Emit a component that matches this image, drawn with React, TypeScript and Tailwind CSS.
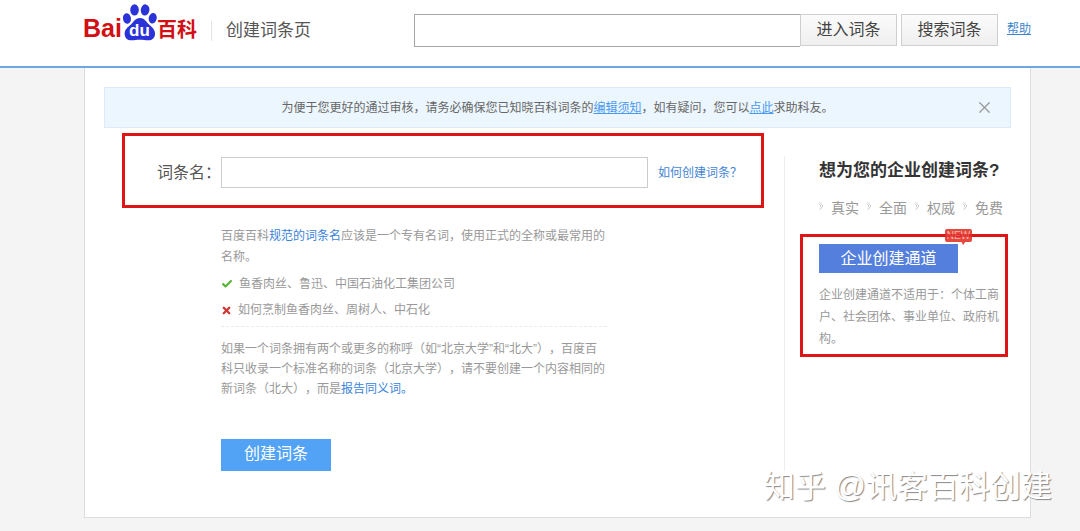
import { useState } from "react";
import { Check, X } from "lucide-react";

const tags = ["真实", "全面", "权威", "免费"];

function Logo() {
  return (
    <a href="#" className="flex items-end h-[37px] shrink-0 font-bold text-[#d20f14]">
      <span className="text-[25px] leading-[26px]">Bai</span>
      <span className="relative w-[35px] h-[37px]">
        <svg viewBox="156 10 106 112" className="w-full h-full" fill="#2a32d8">
          <ellipse cx="171" cy="54" rx="12" ry="16" transform="rotate(-10 171 54)" />
          <ellipse cx="194" cy="28" rx="13" ry="17" />
          <ellipse cx="226" cy="28" rx="13" ry="17" transform="rotate(8 226 28)" />
          <ellipse cx="249" cy="53" rx="12" ry="16" transform="rotate(12 249 53)" />
          <path d="M210 52c-14 0-19 12-27 20-9 8-19 14-19 28 0 13 9 20 20 20 10 0 16-2 26-2s16 2 26 2c12 0 20-8 20-20 0-13-9-20-18-28-9-9-14-20-28-20z" />
        </svg>
        <span className="absolute inset-x-0 bottom-0 text-center text-[17px] leading-[20px] text-white">du</span>
      </span>
      <span className="text-[20px] leading-[22px]">百科</span>
    </a>
  );
}

export default function CreateEntry() {
  const [keyword, setKeyword] = useState("");
  const [entryName, setEntryName] = useState("");
  const [showNotice, setShowNotice] = useState(true);

  return (
    <div
      lang="zh-CN"
      className="relative w-full min-h-screen bg-[#f4f4f4] text-[12px] text-[#999]
      font-['Liberation_Sans','Noto_Sans_CJK_SC',sans-serif] [text-spacing-trim:space-all]">
      {/* Header */}
      <header className="flex items-center h-[68px] pl-[83px] pr-[49px] pb-[5px] bg-white border-b-2 border-[#6ea6de]">
        <div className="flex items-start h-[53px] shrink-0">
          <Logo />
        </div>
        <h1 className="ml-[14px] pl-[14px] border-l border-[#e3e3e3] shrink-0 text-[17px] leading-[20px] text-[#555]">
          创建词条页
        </h1>
        <form className="flex flex-1 items-start min-w-0 ml-[103px]" onSubmit={(e) => e.preventDefault()}>
          <input
            aria-label="词条"
            value={keyword}
            onChange={(e) => setKeyword(e.target.value)}
            className="flex-1 min-w-0 h-[33px] px-2 text-[16px] text-[#333] bg-white border border-r-0 border-[#a5a5a5] outline-none"
          />
          <button className="w-[97px] h-8 shrink-0 text-[16px] text-[#444] border border-[#cfcfcf] bg-gradient-to-b from-[#fbfbfb] to-[#efefef]">
            进入词条
          </button>
          <button className="w-[97px] h-8 ml-1 shrink-0 text-[16px] text-[#444] border border-[#cfcfcf] bg-gradient-to-b from-[#fbfbfb] to-[#efefef]">
            搜索词条
          </button>
        </form>
        <a href="#" className="ml-[9px] pb-[3px] shrink-0 text-[#3b84cf] underline">帮助</a>
      </header>

      {/* Content */}
      <main className="ml-[84px] mr-[49px] px-[19px] pt-[19px] pb-[46px] bg-white border border-t-0 border-[#dcdcdc]">
        {showNotice && (
          <div className="relative flex items-center justify-center h-[41px] bg-[#ecf6fe] border border-[#dcebf7] text-[#666]">
            <p>
              为便于您更好的通过审核，请务必确保您已知晓百科词条的
              <a href="#" className="text-[#4a9af0] underline">编辑须知</a>
              ，如有疑问，您可以
              <a href="#" className="text-[#4a9af0] underline">点此</a>
              求助科友。
            </p>
            <button aria-label="关闭" onClick={() => setShowNotice(false)} className="absolute right-4 top-[10px]">
              <X size={19} strokeWidth={1.5} className="text-[#999]" />
            </button>
          </div>
        )}

        <div className="flex">
          <div className="flex-1 min-w-0">
            <div className="flex items-center h-[75px] mt-[5px] ml-[18px] mr-5 pl-8 pr-[19px] pt-1 border-3 border-[#dd1515]">
              <label htmlFor="entry-name" className="w-16 shrink-0 text-[16px] text-[#555]">词条名：</label>
              <input
                id="entry-name"
                value={entryName}
                onChange={(e) => setEntryName(e.target.value)}
                className="flex-1 min-w-0 h-[31px] px-2 text-[14px] text-[#333] bg-white border border-[#ccc] outline-none"
              />
              <a href="#" className="ml-[10px] shrink-0 text-[#4285d6]">如何创建词条？</a>
            </div>

            <div className="ml-[117px] mt-[18px] max-w-[386px]">
              <p className="leading-[21px]">
                百度百科<a href="#" className="text-[#3b82dc]">规范的词条名</a>应该是一个专有名词，使用正式的全称或最常用的名称。
              </p>
              <ul className="mt-[3px] leading-[26px]">
                <li className="flex items-center gap-[6px]">
                  <Check size={12} strokeWidth={4} className="text-[#55b030]" />
                  鱼香肉丝、鲁迅、中国石油化工集团公司
                </li>
                <li className="flex items-center gap-[6px]">
                  <X size={11} strokeWidth={5} className="text-[#cf3535]" />
                  如何烹制鱼香肉丝、周树人、中石化
                </li>
              </ul>
              <p className="mt-[3px] pt-[12px] leading-[20px] border-t border-dashed border-[#ebebeb]">
                如果一个词条拥有两个或更多的称呼（如“北京大学”和“北大”），百度百科只收录一个标准名称的词条（北京大学），请不要创建一个内容相同的新词条（北大），而是<a href="#" className="text-[#3b82dc]">报告同义词。</a>
              </p>
              <button className="w-[110px] h-8 mt-[40px] pb-[2px] bg-[#52a3f5] text-[16px] text-white">创建词条</button>
            </div>
          </div>

          {/* Enterprise */}
          <aside className="w-[227px] shrink-0 mt-[28px] pl-[15px] pr-[3px] border-l border-[#eee]">
            <h2 className="pl-[19px] text-[17px] leading-[30px] font-bold text-[#333] whitespace-nowrap">
              想为您的企业创建词条?
            </h2>
            <ul className="flex gap-2 pl-[19px] mt-[11px] text-[14px] leading-[22px]">
              {tags.map((tag) => (
                <li key={tag} className="flex gap-[7px]">
                  <svg viewBox="0 0 5 8" className="w-[5px] h-2 mt-[5px]" fill="none" stroke="#aaa" strokeDasharray="1 0.4">
                    <path d="M1 0.5l3 3.5-3 3.5M0.5 2.5L2 4 0.5 5.5" />
                  </svg>
                  {tag}
                </li>
              ))}
            </ul>
            <div className="relative mt-[15px] pl-4 pt-[7px] pb-[4px] border-3 border-[#dd1515]">
              <button className="w-[139px] h-[29px] block bg-[#557fdc] text-[16px] leading-[27px] text-white">
                企业创建通道
              </button>
              <p className="mt-[11px] leading-[22px]">
                企业创建通道不适用于：个体工商户、社会团体、事业单位、政府机构。
              </p>
              <span className="absolute left-[142px] top-[-8px] w-[27px] h-[13px] rounded-[2px] bg-[#e5483c] text-center text-[10px] leading-[13px] text-[#f7b5ae]">
                NEW
                <svg viewBox="0 0 5 4" className="absolute left-4 top-[12px] w-[5px] h-1" fill="#e5483c">
                  <path d="M0 0h5L2 4z" />
                </svg>
                <i className="absolute inset-x-0 top-[5px] h-[3px] bg-[#dd1515]/60" />
              </span>
            </div>
          </aside>
        </div>
      </main>

      <div className="absolute right-7 top-[464px] text-[31px] leading-[46px] text-white [text-shadow:1px_1px_1px_#888]">
        知乎 @讯客百科创建
      </div>
    </div>
  );
}
